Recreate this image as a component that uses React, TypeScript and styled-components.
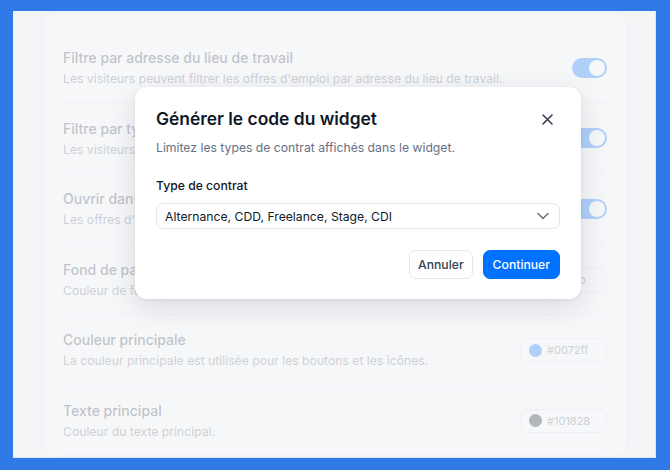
import React from "react";
import styled, { createGlobalStyle } from "styled-components";

const Global = createGlobalStyle`
  html, body { margin: 0; padding: 0; }
  body {
    background: #2f7ae6;
    font-family: Inter, "Noto Sans", sans-serif;
    -webkit-font-smoothing: antialiased;
  }
  * { box-sizing: border-box; }
`;

const Frame = styled.div`
  width: 670px;
  height: 470px;
  padding: 11px 14px 12px 13px;
`;

const Screen = styled.div`
  position: relative;
  height: 100%;
  overflow: hidden;
  background: #f1f2f5;
  border-right: 1px solid #dfe6f3;
  border-bottom: 1px solid #dfe6f3;
`;

const Card = styled.div`
  margin: 2px 0 0 29px;
  width: 585px;
  background: #ffffff;
  border: 1px solid #eceef1;
  border-radius: 12px;
  padding: 19px 19px 0 20px;
`;

const Row = styled.div`
  display: flex;
  align-items: center;
  justify-content: space-between;
  padding: 14px 0 13.5px;
  border-bottom: 1px solid #e9ebef;
`;

const RowText = styled.div`
  display: flex;
  flex-direction: column;
  gap: 1px;
`;

const RowTitle = styled.div`
  font-size: 14px;
  line-height: 21px;
  font-weight: 500;
  color: #3f4756;
`;

const RowDesc = styled.div`
  font-size: 12.2px;
  line-height: 20px;
  color: #6b7280;
`;

const Toggle = styled.div`
  width: 35px;
  height: 20px;
  border-radius: 10px;
  background: #0072ff;
  padding: 2px;
  display: flex;
  justify-content: flex-end;
  margin-bottom: 1px;
  &::after {
    content: "";
    width: 16px;
    height: 16px;
    border-radius: 50%;
    background: #fff;
  }
`;

const ColorField = styled.div`
  width: 87px;
  height: 24px;
  border: 1px solid #e5e7eb;
  border-radius: 6px;
  background: #fff;
  display: flex;
  align-items: center;
  gap: 5px;
  padding: 0 8px;
  font-size: 11px;
  color: #6b7280;
`;

const Swatch = styled.span<{ $c: string }>`
  width: 13px;
  height: 13px;
  border-radius: 50%;
  background: ${(p) => p.$c};
  border: ${(p) => (p.$c === "#f9fafb" ? "1px solid #d1d5db" : "none")};
`;

const Overlay = styled.div`
  position: absolute;
  inset: 0;
  background: rgba(243, 244, 246, 0.72);
`;

const Modal = styled.div`
  position: absolute;
  left: 122px;
  top: 76px;
  width: 446px;
  background: #fff;
  border-radius: 12px;
  box-shadow: 0 8px 28px rgba(17, 24, 39, 0.12), 0 1px 4px rgba(17, 24, 39, 0.06);
  padding: 20px 21px 20px 21px;
`;

const ModalHeader = styled.div`
  display: flex;
  align-items: center;
  justify-content: space-between;
`;

const ModalTitle = styled.h2`
  margin: 0;
  font-size: 17.4px;
  line-height: 24px;
  font-weight: 600;
  color: #101828;
`;

const CloseBtn = styled.button`
  border: none;
  background: none;
  padding: 0;
  width: 16px;
  height: 16px;
  display: flex;
  align-items: center;
  justify-content: center;
  color: #374151;
  margin-right: 5px;
`;

const ModalSub = styled.p`
  margin: 7px 0 0;
  font-size: 12.2px;
  line-height: 20px;
  color: #667085;
`;

const Label = styled.div`
  margin-top: 19px;
  font-size: 12.2px;
  line-height: 18px;
  font-weight: 500;
  color: #101828;
`;

const Select = styled.div`
  margin-top: 8px;
  height: 26px;
  border: 1px solid #e4e7ec;
  border-radius: 7px;
  display: flex;
  align-items: center;
  justify-content: space-between;
  padding: 0 10px 0 8px;
  font-size: 12.2px;
  color: #101828;
`;

const Actions = styled.div`
  margin-top: 21px;
  display: flex;
  justify-content: flex-end;
  gap: 10px;
`;

const Button = styled.button<{ $primary?: boolean }>`
  height: 29px;
  padding: 0 ${(p) => (p.$primary ? 9 : 8)}px;
  border-radius: 7px;
  font-family: inherit;
  font-size: 12.2px;
  font-weight: 500;
  border: 1px solid ${(p) => (p.$primary ? "#0072ff" : "#e4e7ec")};
  background: ${(p) => (p.$primary ? "#0072ff" : "#fff")};
  color: ${(p) => (p.$primary ? "#fff" : "#344054")};
`;

const rows: { title: string; desc: string; color?: string }[] = [
  {
    title: "Filtre par adresse du lieu de travail",
    desc: "Les visiteurs peuvent filtrer les offres d'emploi par adresse du lieu de travail.",
  },
  {
    title: "Filtre par type de contrat",
    desc: "Les visiteurs peuvent filtrer les offres d'emploi par type de contrat.",
  },
  {
    title: "Ouvrir dans un nouvel onglet",
    desc: "Les offres d'emploi s'ouvrent dans un nouvel onglet.",
  },
  { title: "Fond de page", desc: "Couleur de fond de la page.", color: "#f9fafb" },
  {
    title: "Couleur principale",
    desc: "La couleur principale est utilisée pour les boutons et les icônes.",
    color: "#0072ff",
  },
  { title: "Texte principal", desc: "Couleur du texte principal.", color: "#101828" },
];

export default function App() {
  return (
    <Frame>
      <Global />
      <Screen>
        <Card>
          {rows.map((r) => (
            <Row key={r.title}>
              <RowText>
                <RowTitle>{r.title}</RowTitle>
                <RowDesc>{r.desc}</RowDesc>
              </RowText>
              {r.color ? (
                <ColorField>
                  <Swatch $c={r.color} />
                  {r.color}
                </ColorField>
              ) : (
                <Toggle />
              )}
            </Row>
          ))}
        </Card>
        <Overlay />
        <Modal>
          <ModalHeader>
            <ModalTitle>Générer le code du widget</ModalTitle>
            <CloseBtn aria-label="Fermer">
              <svg width="11" height="11" viewBox="0 0 11 11" fill="none" stroke="currentColor" strokeWidth="1.6" strokeLinecap="round">
                <path d="M1 1l9 9M10 1l-9 9" />
              </svg>
            </CloseBtn>
          </ModalHeader>
          <ModalSub>Limitez les types de contrat affichés dans le widget.</ModalSub>
          <Label>Type de contrat</Label>
          <Select>
            <span>Alternance, CDD, Freelance, Stage, CDI</span>
            <svg width="12" height="8" viewBox="0 0 12 8" fill="none" stroke="#6b7280" strokeWidth="1.5" strokeLinecap="round" strokeLinejoin="round">
              <path d="M1 1.5l5 5 5-5" />
            </svg>
          </Select>
          <Actions>
            <Button>Annuler</Button>
            <Button $primary>Continuer</Button>
          </Actions>
        </Modal>
      </Screen>
    </Frame>
  );
}
